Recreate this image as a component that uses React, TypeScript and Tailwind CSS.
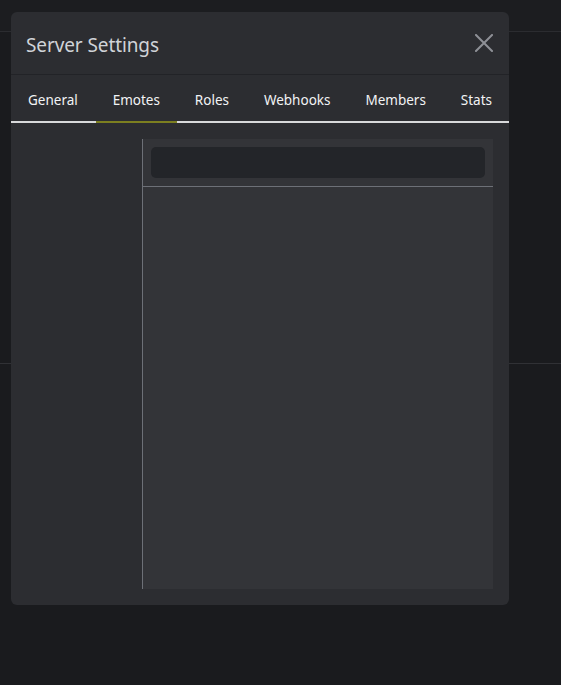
import React from "react";

const TABS = ["General", "Emotes", "Roles", "Webhooks", "Members", "Stats"];

function CloseIcon() {
  return (
    <svg width="18" height="18" viewBox="0 0 18 18" fill="none" stroke="#8e9096" strokeWidth="2" strokeLinecap="square">
      <path d="M1 1 L17 17 M17 1 L1 17" />
    </svg>
  );
}

export default function App() {
  const active = "Emotes";
  return (
    <div
      className="relative w-[561px] h-[685px] bg-[#1a1b1e] overflow-hidden"
      style={{ fontFamily: '"Noto Sans", "Open Sans", sans-serif' }}
    >
      {/* page behind the dialog */}
      <div className="h-[32px] bg-[#1c1d20] border-b border-[#2b2c30]" />
      <div className="h-[332px] border-b border-[#303135]" />

      {/* dialog */}
      <div className="absolute left-[11px] top-[12px] w-[498px] h-[593px] bg-[#2c2d31] rounded-[6px] flex flex-col">
        <div className="h-[63px] shrink-0 flex items-center justify-between pl-[15px] pr-[16px] pt-[4px] border-b border-[#222327]">
          <span className="text-[19px] text-[#d0d3d8] tracking-[-0.1px]">Server Settings</span>
          <button className="mt-[-4px]">
            <CloseIcon />
          </button>
        </div>

        <div className="flex shrink-0 justify-between border-b-2 border-[#d8d9db] h-[48px]">
          {TABS.map((t) => (
            <div
              key={t}
              className={
                "flex items-center pt-[4px] px-[17px] text-[13.5px] text-[#f2f3f5] mb-[-2px] border-b-2 " +
                (t === active ? "border-[#7c7f20]" : "border-transparent")
              }
            >
              {t}
            </div>
          ))}
        </div>

        <div className="flex-1 flex pt-[16px] pb-[16px] pr-[16px]">
          <div className="w-[131px] shrink-0" />
          <div className="flex-1 bg-[#333438] border-l border-[#6d7077] flex flex-col">
            <div className="px-[8px] pt-[8px] pb-[8px] border-b border-[#6d7077]">
              <div className="h-[31px] rounded-[5px] bg-[#232529]" />
            </div>
          </div>
        </div>
      </div>
    </div>
  );
}
